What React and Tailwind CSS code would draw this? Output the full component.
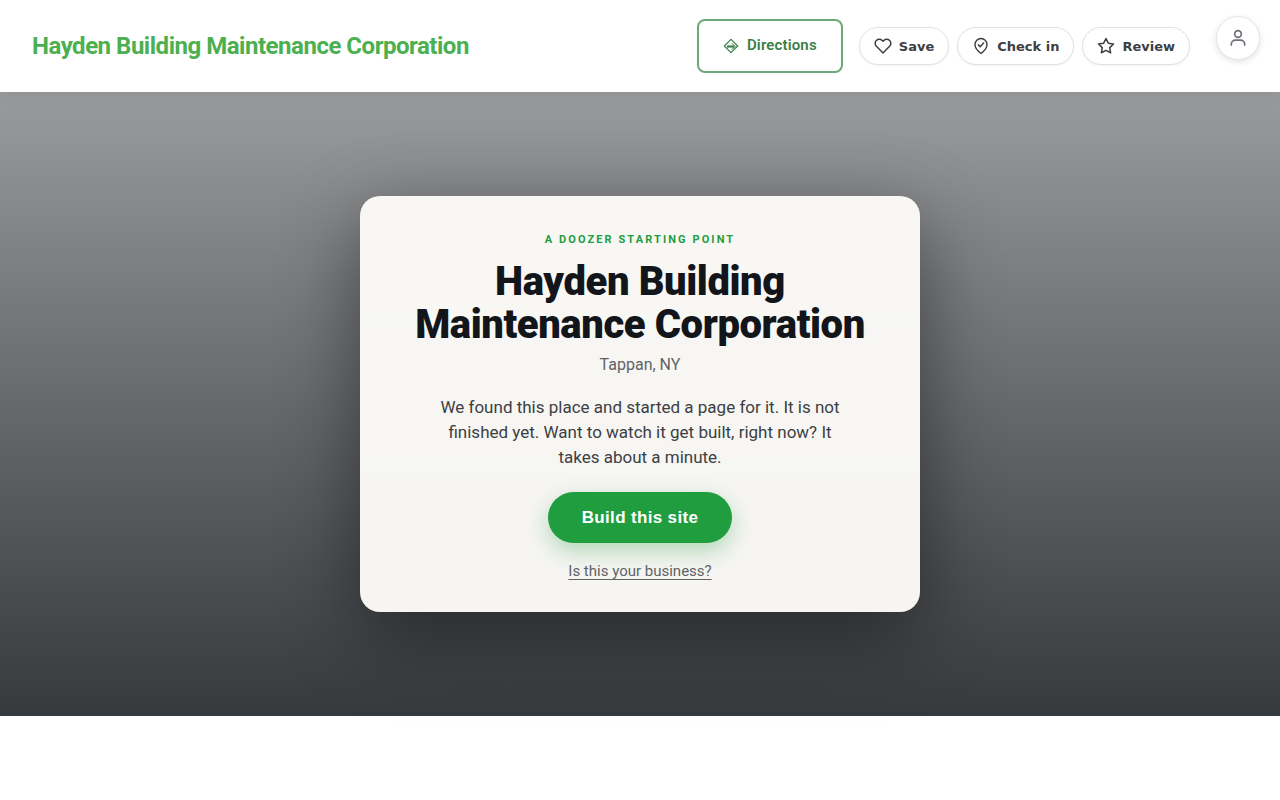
import React from 'react';
import { FiHeart, FiStar } from 'react-icons/fi';

const DirectionsIcon = () => (
  <svg viewBox="0 0 16 16" className="w-4 h-4" fill="none" stroke="currentColor" aria-hidden="true">
    <path d="M8 1.3 14.7 8 8 14.7 1.3 8Z" strokeWidth="1.2" strokeLinejoin="round" />
    <path d="M4 8.5h7" strokeWidth="2.2" />
    <path d="M8.6 5.2 12.4 8.5 8.6 11.4" strokeWidth="1" strokeLinejoin="round" />
  </svg>
);

const CheckInIcon = () => (
  <svg
    viewBox="0 0 24 24"
    className="w-[18px] h-[18px]"
    fill="none"
    stroke="currentColor"
    strokeWidth="1.9"
    strokeLinecap="round"
    strokeLinejoin="round"
    aria-hidden="true"
  >
    <path d="M12 22s-8-6-8-12a8 8 0 0 1 16 0c0 6-8 12-8 12Z" />
    <path d="m8.5 10.5 2.5 2.5 4.5-5" />
  </svg>
);

const UserIcon = () => (
  <svg
    viewBox="0 0 24 24"
    className="w-5 h-5"
    fill="none"
    stroke="currentColor"
    strokeWidth="2"
    strokeLinecap="round"
    strokeLinejoin="round"
    aria-hidden="true"
  >
    <circle cx="12" cy="7.2" r="4" />
    <path d="M4 20.5v-1a5 5 0 0 1 5-5h6a5 5 0 0 1 5 5v1" />
  </svg>
);

const actions = [
  { label: 'Save', icon: <FiHeart size={18} /> },
  { label: 'Check in', icon: <CheckInIcon /> },
  { label: 'Review', icon: <FiStar size={18} /> },
];

const Header = () => (
  <header className="relative z-10 flex items-center justify-between bg-white pl-8 pr-5 h-[92px] shadow-[0_2px_20px_rgba(0,0,0,0.08)]">
    <a href="#" className="text-2xl font-bold tracking-[-0.02em] text-[#4caf50]">
      Hayden Building Maintenance Corporation
    </a>
    <div className="flex items-center">
      <a
        href="#directions"
        className="flex items-center gap-2 h-[54px] px-6 mr-4 rounded-lg border-2 border-[#6fa878] text-[15px] font-semibold tracking-[0.01em] text-[#3a8046]"
      >
        <DirectionsIcon />
        <span className="pb-0.5">Directions</span>
      </a>
      <div className="flex items-center gap-2 mr-[26px]">
        {actions.map((action) => (
          <button
            key={action.label}
            className="flex items-center gap-[7px] h-[38px] px-3.5 rounded-full border border-[#dfe1e4] bg-white shadow-xs font-['DejaVu_Sans',sans-serif] text-[13px] leading-5 font-semibold text-[#3c4043]"
          >
            {action.icon}
            <span className="pt-px">{action.label}</span>
          </button>
        ))}
      </div>
      <button
        aria-label="Account"
        className="flex items-center justify-center self-start w-11 h-11 -mt-[3px] rounded-full border border-[#e4e6e8] bg-white text-[#6b6f76] shadow-[0_2px_6px_rgba(0,0,0,0.12)]"
      >
        <UserIcon />
      </button>
    </div>
  </header>
);

const Hero = () => (
  <section className="flex items-center justify-center min-h-[78vh] px-6 bg-linear-to-b from-[#9a9b9d] to-[#373a3d]">
    <div className="flex flex-col items-center w-full max-w-[560px] px-10 pt-9 pb-[29px] rounded-[20px] bg-[#fdfcf9]/96 text-center shadow-[0_24px_80px_rgba(0,0,0,0.45)]">
      <p className="text-[11px] leading-4 font-bold uppercase tracking-[0.19em] text-[#1f9d3f]">
        A Doozer Starting Point
      </p>
      <h1 className="mt-3 text-[40px] leading-[43px] font-black tracking-[-0.01em] text-[#12151a]">
        Hayden Building Maintenance Corporation
      </h1>
      <p className="mt-[7px] text-base text-[#5f6368]">Tappan, NY</p>
      <p className="mt-[18px] max-w-[410px] text-[17px] leading-[25px] text-[#3c4043]">
        We found this place and started a page for it. It is not finished yet. Want to watch it get
        built, right now? It takes about a minute.
      </p>
      <button className="mt-[22px] h-[51px] px-[34px] rounded-full bg-[#1f9d3f] font-['Liberation_Sans',Arial,sans-serif] text-[17px] font-bold tracking-[0.02em] text-white shadow-[0_8px_22px_rgba(31,157,63,0.32)]">
        Build this site
      </button>
      <a href="#claim" className="mt-4 text-[15px] leading-6 text-[#5f6368] underline underline-offset-3">
        Is this your business?
      </a>
    </div>
  </section>
);

const App = () => {
  return (
    <div className="min-h-screen bg-white font-['Roboto',sans-serif]">
      <Header />
      <Hero />
    </div>
  );
};

export default App;
